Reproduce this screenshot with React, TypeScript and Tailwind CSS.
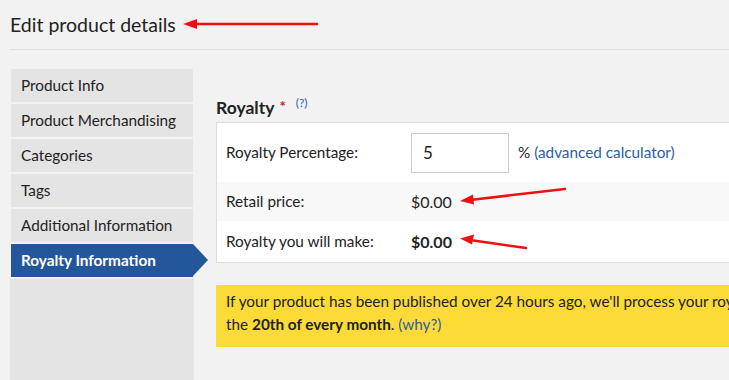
import React from "react";

const items = [
  "Product Info",
  "Product Merchandising",
  "Categories",
  "Tags",
  "Additional Information",
];

export default function App() {
  return (
    <div
      className="relative w-[729px] h-[380px] overflow-hidden bg-[#f2f2f2] text-[#222]"
      style={{ fontFamily: "Lato, 'Open Sans', sans-serif" }}
    >
      <div className="ml-[10px] h-[50px] border-b border-[#dedede] flex items-center">
        <h1 className="text-[19.5px] leading-none text-[#222] pt-[1px]">Edit product details</h1>
      </div>
      <div className="flex items-start">
        <div className="ml-[10px] mt-[19px] w-[184px] shrink-0 flex flex-col gap-[2px]">
          {items.map((t) => (
            <div
              key={t}
              className="mx-[1px] h-[33px] bg-[#e4e4e4] flex items-center pl-[10px] text-[15.3px] whitespace-nowrap"
            >
              {t}
            </div>
          ))}
          <div className="relative mx-[1px] h-[33px] bg-[#24579a] flex items-center pl-[10px] text-[15.3px] font-bold text-white whitespace-nowrap">
            Royalty Information
            <span className="absolute right-[-15px] top-0 w-0 h-0 border-y-[16.5px] border-y-transparent border-l-[15px] border-l-[#24579a]" />
          </div>
          <div className="h-[120px] bg-[#e4e4e4]" />
        </div>
        <div className="ml-[22px] mt-[49px] w-[640px] shrink-0">
          <div className="flex items-start h-[23px]">
            <span className="text-[17.5px] font-bold leading-none">Royalty</span>
            <span className="ml-[5px] text-[#c0272d] text-[15px] font-bold leading-none">*</span>
            <span className="ml-[10px] text-[#2a5ea8] text-[12px] leading-none -mt-[2px]">(?)</span>
          </div>
          <div className="border border-[#dddddd] bg-white">
            <div className="flex items-center h-[59px] pl-[9px]">
              <div className="w-[185px] text-[15.3px]">Royalty Percentage:</div>
              <div className="w-[98px] h-[40px] border border-[#cccccc] flex items-center pl-[11px] text-[17px]">5</div>
              <div className="ml-[9px] text-[15.3px]">
                % <span className="text-[#2a5ea8]">(advanced calculator)</span>
              </div>
            </div>
            <div className="flex items-center h-[39px] pl-[9px] bg-[#f8f8f8]">
              <div className="w-[185px] text-[15.3px]">Retail price:</div>
              <div className="text-[16px]">$0.00</div>
            </div>
            <div className="flex items-center h-[41px] pl-[9px]">
              <div className="w-[185px] text-[15.3px]">Royalty you will make:</div>
              <div className="text-[16px] font-bold">$0.00</div>
            </div>
          </div>
          <div className="mt-[22px] bg-[#fddb36] h-[62px] pl-[10px] pt-[5px] text-[15.3px] leading-[23px] whitespace-nowrap">
            <div>If your product has been published over 24 hours ago, we'll process your royalty payment on</div>
            <div>
              the <b>20th of every month</b>. <span className="text-[#2a5ea8]">(why?)</span>
            </div>
          </div>
        </div>
      </div>
      <svg className="absolute left-0 top-0 pointer-events-none" width="729" height="380">
        <g stroke="#ee1111" strokeWidth="2.5" fill="#ee1111" strokeLinecap="round">
          <line x1="317" y1="24" x2="192" y2="24" />
          <polygon points="183,24 197,19 197,29" stroke="none" />
          <line x1="565" y1="189" x2="470" y2="200" />
          <polygon points="460,201 473,194.5 474,204.5" stroke="none" />
          <line x1="526" y1="248" x2="470" y2="240" />
          <polygon points="460,238.5 474,234.5 472,244.5" stroke="none" />
        </g>
      </svg>
    </div>
  );
}
